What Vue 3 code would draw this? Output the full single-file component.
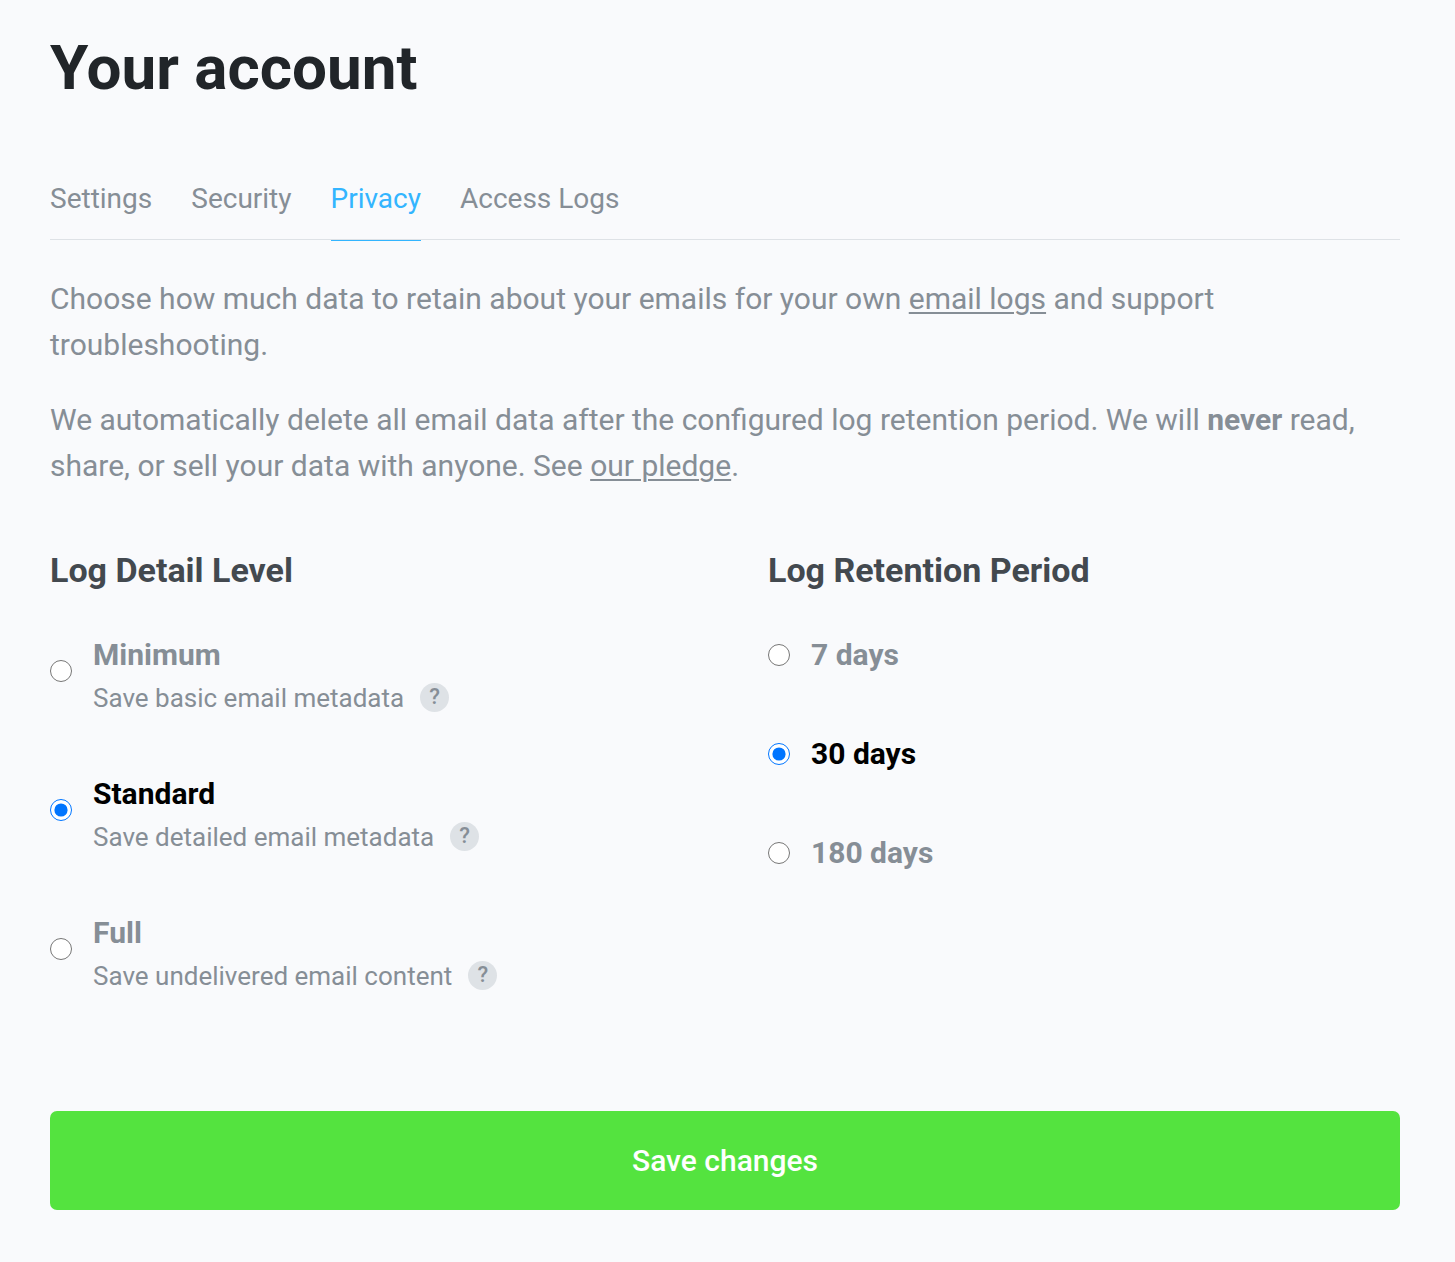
<script setup>
import { ref } from 'vue'

const tabs = ['Settings', 'Security', 'Privacy', 'Access Logs']
const activeTab = 'Privacy'

const levels = [
  { id: 'minimum', name: 'Minimum', note: 'Save basic email metadata' },
  { id: 'standard', name: 'Standard', note: 'Save detailed email metadata' },
  { id: 'full', name: 'Full', note: 'Save undelivered email content' },
]
const level = ref('standard')

const periods = [7, 30, 180]
const period = ref(30)
</script>

<template>
  <main class="account">
    <h1>Your account</h1>

    <nav class="tabs">
      <a
        v-for="tab in tabs"
        :key="tab"
        href="#"
        class="tab"
        :class="{ active: tab === activeTab }"
      >{{ tab }}</a>
    </nav>

    <form @submit.prevent>
      <p>
        Choose how much data to retain about your emails for your own
        <a href="#">email logs</a> and support troubleshooting.
      </p>
      <p>
        We automatically delete all email data after the configured log retention period.
        We will <strong>never</strong> read, share, or sell your data with anyone. See
        <a href="#">our pledge</a>.
      </p>

      <div class="columns">
        <section>
          <h2>Log Detail Level</h2>
          <div class="options levels">
            <div v-for="item in levels" :key="item.id" class="option">
              <input :id="item.id" v-model="level" type="radio" name="level" :value="item.id" />
              <div>
                <label :for="item.id" class="name" :class="{ chosen: level === item.id }">{{ item.name }}</label>
                <div class="note">
                  <span>{{ item.note }}</span>
                  <button type="button" class="help">?</button>
                </div>
              </div>
            </div>
          </div>
        </section>

        <section>
          <h2>Log Retention Period</h2>
          <div class="options periods">
            <div v-for="days in periods" :key="days" class="option">
              <input :id="`days-${days}`" v-model="period" type="radio" name="period" :value="days" />
              <label :for="`days-${days}`" class="name" :class="{ chosen: period === days }">{{ days }} days</label>
            </div>
          </div>
        </section>
      </div>

      <button type="submit" class="save">Save changes</button>
    </form>
  </main>
</template>

<style>
body {
  margin: 0;
  background: #f9fafc;
}
</style>

<style scoped>
.account {
  padding: 32px 55px 52px 50px;
  font-family: Roboto, sans-serif;
  font-size: 30px;
  line-height: 46px;
  color: #868e96;
}

h1 {
  margin: 0;
  font-size: 62px;
  font-weight: 700;
  line-height: 72px;
  color: #212529;
}

.tabs {
  display: flex;
  gap: 39px;
  margin-top: 72px;
  border-bottom: 1px solid #dee2e6;
}

.tab {
  margin-bottom: -2px;
  padding-bottom: 18px;
  border-bottom: 1px solid transparent;
  font-size: 28px;
  color: #868e96;
  text-decoration: none;
}

.tab.active {
  border-color: #33b5ff;
  color: #33b5ff;
}

p {
  margin: 0 0 29px;
}

form {
  padding-top: 36px;
}

p a {
  color: inherit;
  text-decoration-thickness: 2px;
  text-underline-offset: 3px;
}

.columns {
  display: grid;
  grid-template-columns: 1fr 1fr;
  column-gap: 86px;
  margin-top: 58px;
}

h2 {
  margin: 0 0 35px;
  font-size: 34px;
  font-weight: 700;
  line-height: 46px;
  color: #43494f;
}

.options {
  display: flex;
  flex-direction: column;
}

.levels {
  gap: 53px;
}

.periods {
  gap: 45px;
}

.option {
  display: flex;
  align-items: center;
  gap: 21px;
}

.option input {
  flex: none;
  width: 22px;
  height: 22px;
  margin: 0;
  accent-color: #0075ff;
}

.name {
  display: block;
  font-weight: 700;
  line-height: 54px;
}

.name.chosen {
  color: #000;
}

.note {
  display: flex;
  align-items: center;
  gap: 16px;
  font-size: 26px;
  line-height: 32px;
}

.help {
  width: 29px;
  height: 29px;
  margin-bottom: 2px;
  padding: 0;
  border: 0;
  border-radius: 50%;
  background: #dee2e6;
  font-family: inherit;
  font-size: 22px;
  font-weight: 500;
  line-height: 28px;
  color: #868e96;
}

.save {
  display: block;
  width: 100%;
  height: 99px;
  margin-top: 119px;
  padding: 0;
  border: 0;
  border-radius: 7px;
  background: #54e33f;
  font-family: inherit;
  font-size: 30px;
  font-weight: 500;
  color: #fff;
}
</style>
